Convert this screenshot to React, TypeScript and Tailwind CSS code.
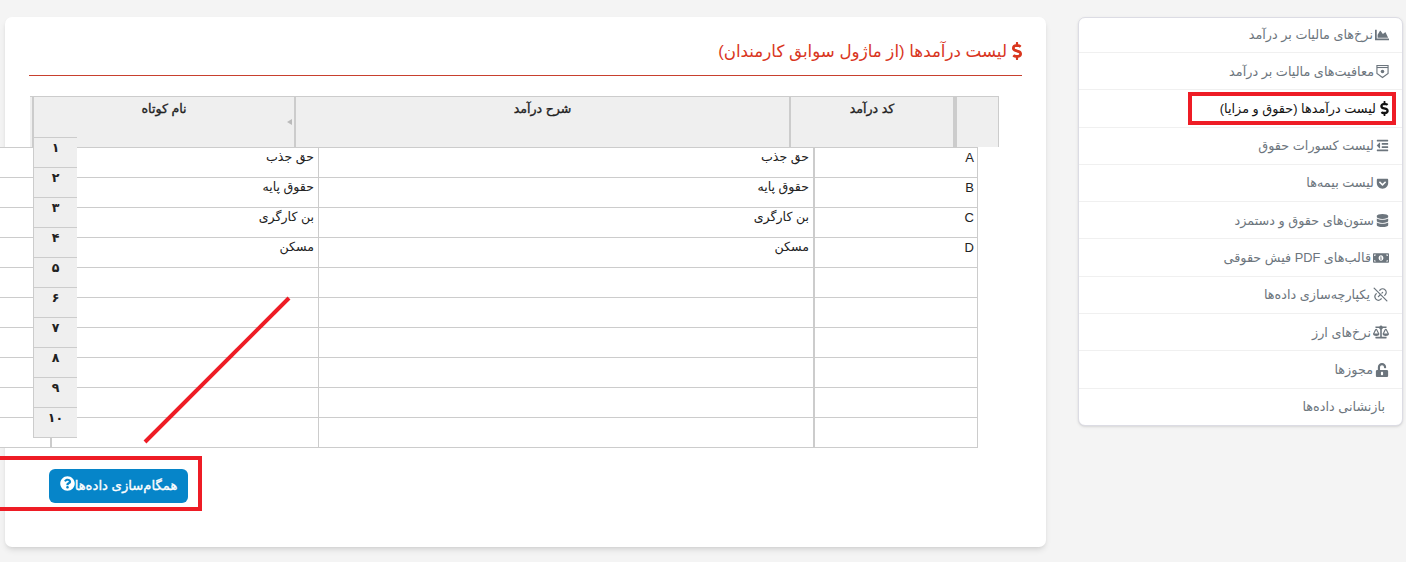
import { FaBalanceScale, FaChartArea, FaDatabase, FaDollarSign, FaGetPocket, FaMoneyBillAlt, FaOutdent, FaQuestionCircle, FaUnlockAlt } from "react-icons/fa"
import { TbLinkOff } from "react-icons/tb"
import type { ReactNode } from "react"

const fontStack = "font-['Liberation_Sans','DejaVu_Sans',sans-serif]"

// no matching glyph in the icon packs, so this one is drawn by hand
function BadgeIcon() {
  return (
    <svg width="13" height="15" viewBox="0 0 14 15" fill="none" stroke="currentColor" strokeWidth="1.2">
      <path d="M1 1h12v8.5l-6 4.5-6-4.5z" />
      <path d="M1 3.2h12" />
      <circle cx="7" cy="7.4" r="1.9" fill="currentColor" stroke="none" />
    </svg>
  )
}

const menu: { label: string; icon?: ReactNode; active?: boolean }[] = [
  { label: "نرخ‌های مالیات بر درآمد", icon: <FaChartArea size={14} /> },
  { label: "معافیت‌های مالیات بر درآمد", icon: <BadgeIcon /> },
  { label: "لیست درآمدها (حقوق و مزایا)", icon: <FaDollarSign className="ml-[2px] h-[15px] w-[9px]" />, active: true },
  { label: "لیست کسورات حقوق", icon: <FaOutdent size={13} /> },
  { label: "لیست بیمه‌ها", icon: <FaGetPocket size={13} /> },
  { label: "ستون‌های حقوق و دستمزد", icon: <FaDatabase size={13} /> },
  { label: "قالب‌های PDF فیش حقوقی", icon: <FaMoneyBillAlt size={16} /> },
  { label: "یکپارچه‌سازی داده‌ها", icon: <TbLinkOff size={17} strokeWidth={1.8} /> },
  { label: "نرخ‌های ارز", icon: <FaBalanceScale size={16} /> },
  { label: "مجوزها", icon: <FaUnlockAlt size={14} /> },
  { label: "بازنشانی داده‌ها" },
]

const rows = [
  ["A", "حق جذب", "حق جذب"],
  ["B", "حقوق پایه", "حقوق پایه"],
  ["C", "بن کارگری", "بن کارگری"],
  ["D", "مسکن", "مسکن"],
  ["", "", ""],
  ["", "", ""],
  ["", "", ""],
  ["", "", ""],
  ["", "", ""],
  ["", "", ""],
]

const rowNumbers = ["۱", "۲", "۳", "۴", "۵", "۶", "۷", "۸", "۹", "۱۰"]

function HeaderCell({ className, children }: { className: string; children?: ReactNode }) {
  return (
    <div className={`relative h-[50px] shrink-0 border-l-2 border-[#ccc] pt-[3px] text-center text-[12.6px] text-[#222] [-webkit-text-stroke:0.35px_#222] ${className}`}>
      {children}
    </div>
  )
}

export default function App() {
  return (
    <div dir="rtl" className={`relative flex h-[562px] w-[1406px] items-start overflow-hidden bg-[#f4f4f4] pr-[3px] pt-[17px] ${fontStack}`}>
      <aside className="w-[325px] shrink-0 rounded-[7px] border border-[#dcdce4] bg-white shadow-sm">
        {menu.map((item) => (
          <div
            key={item.label}
            className={`flex h-[37.3px] items-center gap-[2px] border-b border-[#f0f0f0] text-[12.8px] first:h-[35px] last:h-[36px] last:border-b-0 ${item.active ? "text-[#111]" : "text-[#6c757d]"} ${item.icon ? "pr-[13px]" : "pr-[17px]"}`}
          >
            {item.icon}
            <span>{item.label}</span>
          </div>
        ))}
      </aside>

      <main className="mr-[32px] h-[530px] w-[1041px] shrink-0 rounded-[7px] bg-white px-[24px] pt-[20px] shadow-md">
        <h1 className="flex h-[39px] items-start gap-[5px] border-b border-[#c8402e] pt-[2px] text-[16.7px] font-normal text-[#d9361e]">
          <FaDollarSign className="mt-[3px] h-[18px] w-[10px]" />
          <span>لیست درآمدها (از ماژول سوابق کارمندان)</span>
        </h1>

        <div className="relative mt-[20px] w-[1022px]">
          <div className="mr-[23px] flex w-[969px] border-t border-r border-[#ccc] bg-[#efefef]">
            <HeaderCell className="w-[43px] border-l-0" />
            <HeaderCell className="w-[166px] border-r-2">کد درآمد</HeaderCell>
            <HeaderCell className="w-[495px]">شرح درآمد</HeaderCell>
            <HeaderCell className="w-[262px]">
              نام کوتاه
              <span className="absolute right-[2px] top-[22px] size-0 border-y-[3px] border-r-[5px] border-y-transparent border-r-[#bbb]" />
            </HeaderCell>
          </div>

          <div className="relative mr-[44px] w-[978px] border-t border-[#ccc] bg-white text-[12.6px] text-[#222]">
            {rows.map((row, i) => (
              <div key={i} className="flex h-[30px] border-b border-[#ccc]">
                <div className="w-[165px] border-r border-l-2 border-[#ccc] pr-[3px] text-[13px]">{row[0]}</div>
                <div className="w-[495px] border-l border-[#ccc] pr-[4px]">{row[1]}</div>
                <div className="w-[268px] border-l-2 border-[#ccc] pr-[4px]">{row[2]}</div>
              </div>
            ))}

            <div className="absolute left-[33px] top-[-11px] w-[44px] border-t border-l border-[#ccc] bg-[#efefef] text-center text-[12.6px] font-bold text-[#222]">
              {rowNumbers.map((n) => (
                <div key={n} className="h-[30px] border-b border-[#ccc] pt-[1px]">
                  {n}
                </div>
              ))}
            </div>
          </div>
        </div>

        <div className="mt-[21px] ml-[-24px] flex justify-end">
          <button
            type="button"
            className="ml-[44px] flex h-[34px] w-[139px] items-center justify-center rounded-[6px] bg-[#0685c9] text-[13.2px] text-white [-webkit-text-stroke:0.35px_white]"
          >
            <span>همگام‌سازی داده‌ها</span>
            <FaQuestionCircle size={15} className="mb-[6px] text-white" />
          </button>
        </div>
      </main>

      {/* Annotations drawn over the screenshot */}
      <div className="absolute left-[1188px] top-[92px] h-[33px] w-[208px] border-[4px] border-[#ee1c25]" />
      <div className="absolute left-[-10px] top-[456px] h-[55px] w-[212px] border-[4px] border-[#ee1c25]" />
      <svg className="absolute left-[140px] top-[295px]" width="154" height="150" viewBox="0 0 154 150">
        <line x1="149" y1="3" x2="5" y2="147" stroke="#ee1c25" strokeWidth="4" />
      </svg>
    </div>
  )
}
